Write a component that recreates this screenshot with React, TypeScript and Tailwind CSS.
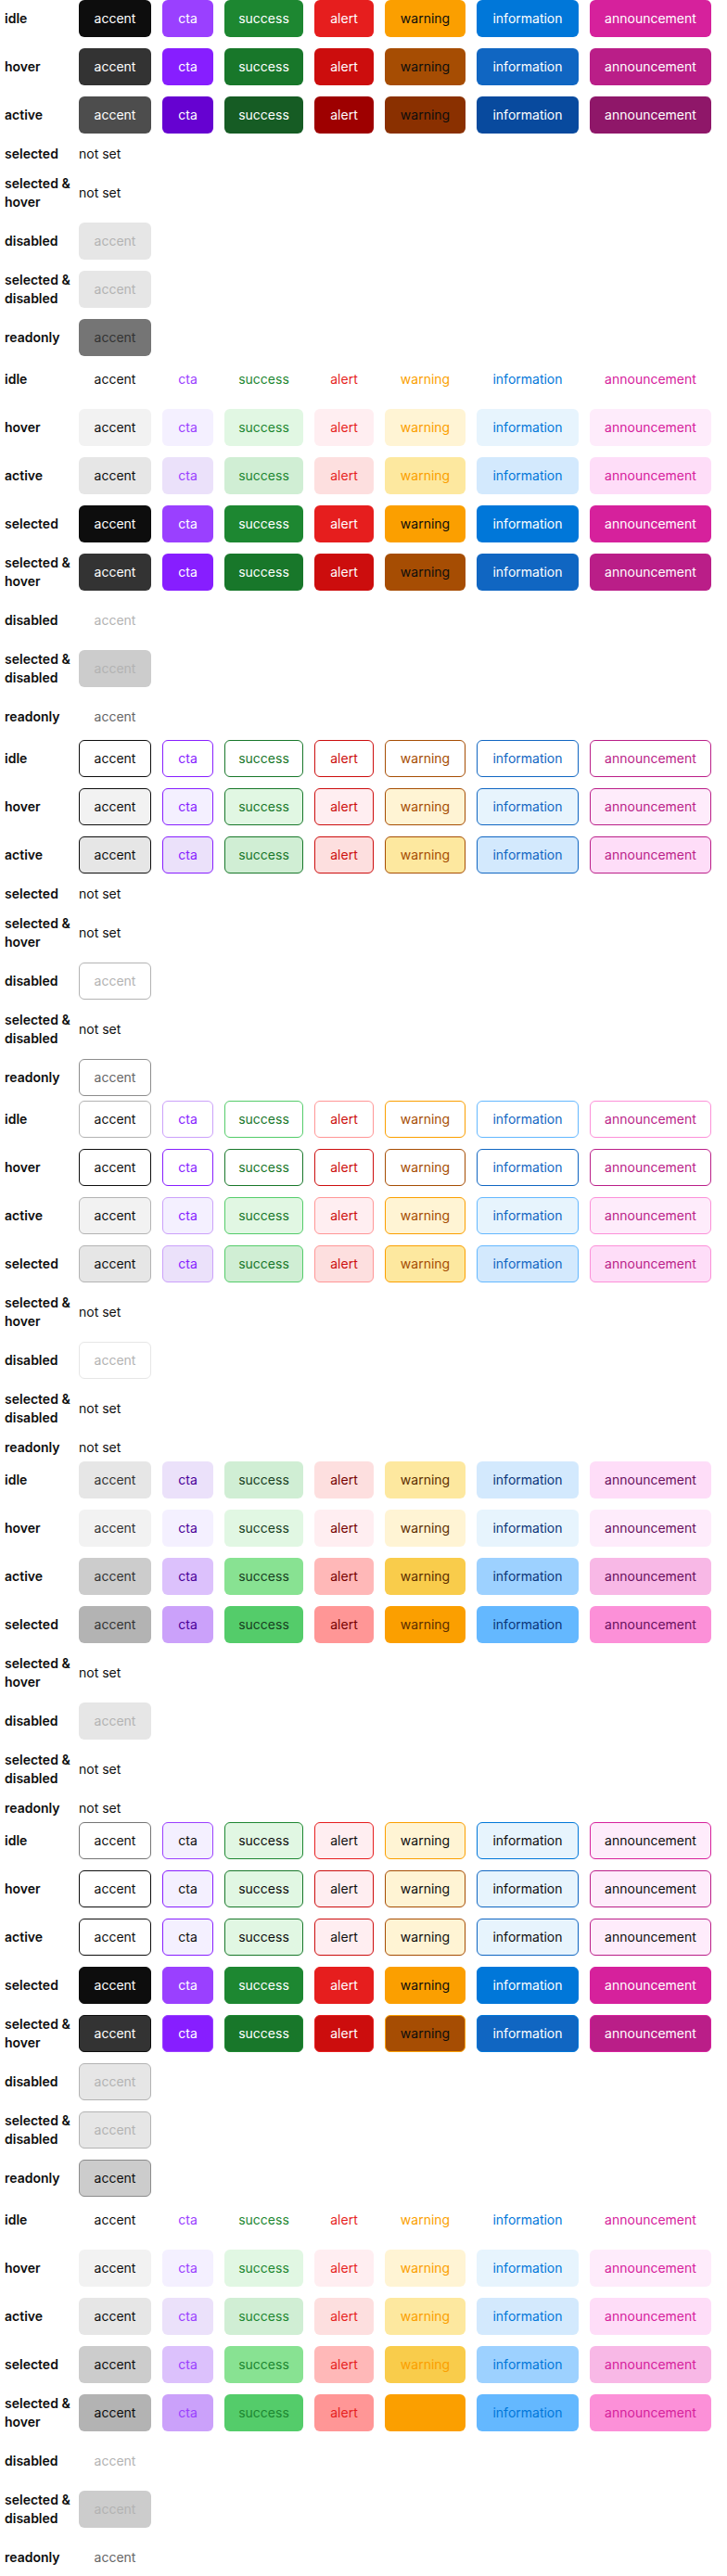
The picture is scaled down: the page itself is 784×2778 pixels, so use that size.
type Box = string;

const TONES = ["accent", "cta", "success", "alert", "warning", "information", "announcement"];

const SOLID: Box[] = [
  "bg-[#0d0d0d]", "bg-[#9a40ff]", "bg-[#1d8731]", "bg-[#e61e1e]", "bg-[#fb9f00]", "bg-[#0077d9]", "bg-[#d6219c]",
];
const SOLID_HOVER: Box[] = [
  "bg-[#333333]", "bg-[#871eff]", "bg-[#18772a]", "bg-[#cc0d0d]", "bg-[#a64d03]", "bg-[#1066c2]", "bg-[#ba1e88]",
];
const SOLID_ACTIVE: Box[] = [
  "bg-[#4d4d4d]", "bg-[#6602d1]", "bg-[#165c24]", "bg-[#9e0000]", "bg-[#8a3000]", "bg-[#084a9e]", "bg-[#8f1769]",
];
const FAINT: Box[] = [
  "bg-[#f2f2f2]", "bg-[#f4f0ff]", "bg-[#e1f7e3]", "bg-[#ffeef1]", "bg-[#fff4d4]", "bg-[#e7f4fd]", "bg-[#feecfb]",
];
const SOFT: Box[] = [
  "bg-[#e6e6e6]", "bg-[#ebe1fa]", "bg-[#d0eed4]", "bg-[#fddfdf]", "bg-[#fde89f]", "bg-[#d3e9fd]", "bg-[#feddf8]",
];
const MEDIUM: Box[] = [
  "bg-[#cccccc]", "bg-[#dcc1fc]", "bg-[#88e292]", "bg-[#ffb8b8]", "bg-[#f9cc4b]", "bg-[#9dd1ff]", "bg-[#f8b8e6]",
];
const STRONG: Box[] = [
  "bg-[#b3b3b3]", "bg-[#cba1fa]", "bg-[#54cc6a]", "bg-[#ff9696]", "bg-[#fb9f00]", "bg-[#64b8ff]", "bg-[#fc90d8]",
];
const WHITE: Box[] = TONES.map(() => "bg-white");
const WHITE_FAINT: Box[] = ["bg-white", ...FAINT.slice(1)];

const ON_SOLID: Box[] = [
  "text-white", "text-white", "text-white", "text-white", "text-[#0d0d0d]", "text-white", "text-white",
];
const TEXT: Box[] = [
  "text-[#0d0d0d]", "text-[#9a40ff]", "text-[#1d8731]", "text-[#e61e1e]", "text-[#fb9f00]", "text-[#0077d9]", "text-[#d6219c]",
];
const TEXT_DARK: Box[] = [
  "text-[#0d0d0d]", "text-[#871eff]", "text-[#18772a]", "text-[#cc0d0d]", "text-[#a64d03]", "text-[#1066c2]", "text-[#ba1e88]",
];
const TEXT_DEEP: Box[] = [
  "text-[#333333]", "text-[#4a0099]", "text-[#17401f]", "text-[#750000]", "text-[#5c2e00]", "text-[#0a3578]", "text-[#690f5d]",
];
const TEXT_BLACK: Box[] = TONES.map(() => "text-[#0d0d0d]");

const LINE: Box[] = [
  "border-[#757575]", "border-[#9a40ff]", "border-[#1d8731]", "border-[#e61e1e]", "border-[#fb9f00]", "border-[#0077d9]", "border-[#d6219c]",
];
const LINE_SOLID: Box[] = ["border-[#0d0d0d]", ...LINE.slice(1)];
const LINE_DARK: Box[] = [
  "border-[#0d0d0d]", "border-[#871eff]", "border-[#18772a]", "border-[#cc0d0d]", "border-[#a64d03]", "border-[#1066c2]", "border-[#ba1e88]",
];
const LINE_SOFT: Box[] = [
  "border-[#b3b3b3]", "border-[#cba1fa]", "border-[#54cc6a]", "border-[#ff9696]", "border-[#fb9f00]", "border-[#64b8ff]", "border-[#fc90d8]",
];
const NO_LINE: Box[] = TONES.map(() => "border-transparent");

const paint = (fill: Box[], text: Box[], line: Box[] = NO_LINE): string[] =>
  TONES.map((_, i) => `${fill[i]} ${text[i]} ${line[i]}`);

type State = { name: string; tones?: string[] };

const state = (name: string, tones?: string[]): State => ({ name, tones });

const GROUPS: { id: string; states: State[] }[] = [
  {
    id: "primary",
    states: [
      state("idle", paint(SOLID, ON_SOLID)),
      state("hover", paint(SOLID_HOVER, ON_SOLID)),
      state("active", paint(SOLID_ACTIVE, ON_SOLID)),
      state("selected"),
      state("selected & hover"),
      state("disabled", ["bg-[#e6e6e6] text-[#b3b3b3] border-transparent"]),
      state("selected & disabled", ["bg-[#e6e6e6] text-[#b3b3b3] border-transparent"]),
      state("readonly", ["bg-[#757575] text-[#333333] border-transparent"]),
    ],
  },
  {
    id: "ghost",
    states: [
      state("idle", paint(WHITE, TEXT)),
      state("hover", paint(FAINT, TEXT)),
      state("active", paint(SOFT, TEXT)),
      state("selected", paint(SOLID, ON_SOLID)),
      state("selected & hover", paint(SOLID_HOVER, ON_SOLID)),
      state("disabled", ["bg-white text-[#b3b3b3] border-transparent"]),
      state("selected & disabled", ["bg-[#cccccc] text-[#b3b3b3] border-transparent"]),
      state("readonly", ["bg-white text-[#666666] border-transparent"]),
    ],
  },
  {
    id: "outline",
    states: [
      state("idle", paint(WHITE, TEXT_DARK, LINE_DARK)),
      state("hover", paint(FAINT, TEXT_DARK, LINE_DARK)),
      state("active", paint(SOFT, TEXT_DARK, LINE_DARK)),
      state("selected"),
      state("selected & hover"),
      state("disabled", ["bg-white text-[#b3b3b3] border-[#b3b3b3]"]),
      state("selected & disabled"),
      state("readonly", ["bg-white text-[#666666] border-[#8c8c8c]"]),
    ],
  },
  {
    id: "surface",
    states: [
      state("idle", paint(WHITE, TEXT_DARK, LINE_SOFT)),
      state("hover", paint(WHITE, TEXT_DARK, LINE_DARK)),
      state("active", paint(FAINT, TEXT_DARK, LINE_SOFT)),
      state("selected", paint(SOFT, TEXT_DARK, LINE_SOFT)),
      state("selected & hover"),
      state("disabled", ["bg-white text-[#b3b3b3] border-[#e6e6e6]"]),
      state("selected & disabled"),
      state("readonly"),
    ],
  },
  {
    id: "tag",
    states: [
      state("idle", paint(SOFT, TEXT_DEEP)),
      state("hover", paint(FAINT, TEXT_DEEP)),
      state("active", paint(MEDIUM, TEXT_DEEP)),
      state("selected", paint(STRONG, TEXT_DEEP)),
      state("selected & hover"),
      state("disabled", ["bg-[#e6e6e6] text-[#b3b3b3] border-transparent"]),
      state("selected & disabled"),
      state("readonly"),
    ],
  },
  {
    id: "input",
    states: [
      state("idle", paint(WHITE_FAINT, TEXT_BLACK, LINE)),
      state("hover", paint(WHITE_FAINT, TEXT_BLACK, LINE_DARK)),
      state("active", paint(WHITE_FAINT, TEXT_BLACK, LINE_DARK)),
      state("selected", paint(SOLID, ON_SOLID, LINE_SOLID)),
      state("selected & hover", paint(SOLID_HOVER, ON_SOLID, LINE_SOLID)),
      state("disabled", ["bg-[#e6e6e6] text-[#b3b3b3] border-[#b3b3b3]"]),
      state("selected & disabled", ["bg-[#e6e6e6] text-[#b3b3b3] border-[#b3b3b3]"]),
      state("readonly", ["bg-[#cccccc] text-[#0d0d0d] border-[#8c8c8c]"]),
    ],
  },
  {
    id: "item",
    states: [
      state("idle", paint(WHITE, TEXT)),
      state("hover", paint(FAINT, TEXT)),
      state("active", paint(SOFT, TEXT)),
      state("selected", paint(MEDIUM, TEXT)),
      state("selected & hover", paint(STRONG, TEXT)),
      state("disabled", ["bg-white text-[#b3b3b3] border-transparent"]),
      state("selected & disabled", ["bg-[#cccccc] text-[#b3b3b3] border-transparent"]),
      state("readonly", ["bg-white text-[#666666] border-transparent"]),
    ],
  },
];

function StateRow({ name, tones }: State) {
  return (
    <div className="grid grid-cols-[80px_1fr] items-center">
      <div className="pr-1 font-semibold">{name}</div>
      {tones ? (
        <div className="grid grid-cols-[78px_55px_85px_64px_87px_110px_131px] gap-x-3">
          {tones.map((tone, i) => (
            <button
              key={TONES[i]}
              type="button"
              disabled={name.includes("disabled")}
              className={`h-10 rounded-md border text-center whitespace-nowrap ${tone}`}
            >
              {TONES[i]}
            </button>
          ))}
        </div>
      ) : (
        <div>not set</div>
      )}
    </div>
  );
}

export default function App() {
  return (
    <main className="flex flex-col gap-[5px] bg-white pl-[5px] font-['Inter',sans-serif] text-sm leading-5 text-[#0d0d0d]">
      {GROUPS.map((group) => (
        <section key={group.id} className="flex flex-col gap-3">
          {group.states.map((s) => (
            <StateRow key={s.name} name={s.name} tones={s.tones} />
          ))}
        </section>
      ))}
    </main>
  );
}
